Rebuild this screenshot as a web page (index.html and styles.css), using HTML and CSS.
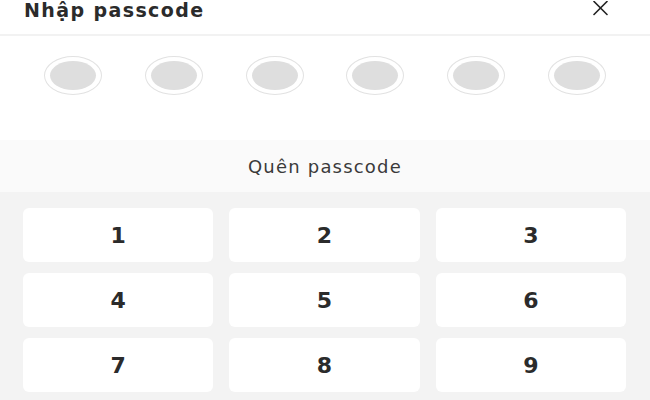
FILE: index.html
```html
<!DOCTYPE html>
<html lang="vi">
<head>
  <meta charset="UTF-8" />
  <meta name="viewport" content="width=device-width, initial-scale=1.0" />
  <title>Nhập passcode</title>
  <link rel="stylesheet" href="styles.css">
</head>
<body>
  <div class="header">
    <h1 class="title">Nhập passcode</h1>
    <button class="close-btn" aria-label="Đóng">
      <svg width="15" height="15" viewBox="0 0 15 15">
        <path d="M1 0.5 L14 13.5 M14 0.5 L1 13.5" stroke="#222" stroke-width="1.6" fill="none" stroke-linecap="round"/>
      </svg>
    </button>
  </div>

  <div class="dots">
    <div class="dot-slot"><span class="dot"><span class="dot-fill"></span></span></div>
    <div class="dot-slot"><span class="dot"><span class="dot-fill"></span></span></div>
    <div class="dot-slot"><span class="dot"><span class="dot-fill"></span></span></div>
    <div class="dot-slot"><span class="dot"><span class="dot-fill"></span></span></div>
    <div class="dot-slot"><span class="dot"><span class="dot-fill"></span></span></div>
    <div class="dot-slot"><span class="dot"><span class="dot-fill"></span></span></div>
  </div>

  <div class="forgot">
    <a href="#" class="forgot-link">Quên passcode</a>
  </div>

  <div class="keypad">
    <button class="key">1</button>
    <button class="key">2</button>
    <button class="key">3</button>
    <button class="key">4</button>
    <button class="key">5</button>
    <button class="key">6</button>
    <button class="key">7</button>
    <button class="key">8</button>
    <button class="key">9</button>
  </div>
</body>
</html>
```

FILE: styles.css
```css
* {
  margin: 0;
  padding: 0;
  box-sizing: border-box;
  font-family: "DejaVu Sans", sans-serif;
}
body {
  background: #f3f3f3;
  width: 650px;
  min-height: 400px;
}
.header {
  height: 36px;
  background: #fff;
  display: flex;
  justify-content: space-between;
  align-items: flex-start;
  padding: 1px 42px 0 24px;
  border-bottom: 2px solid #f2f2f2;
}
.title {
  font-size: 19px;
  line-height: 19px;
  font-weight: bold;
  letter-spacing: 1.4px;
  color: #2b2b2b;
}
.close-btn {
  background: none;
  border: none;
  width: 15px;
  height: 15px;
  display: block;
  cursor: pointer;
}
.close-btn svg {
  display: block;
}
.dots {
  height: 104px;
  background: #fff;
  display: flex;
  padding: 20px 23px 0 23px;
}
.dot-slot {
  flex: 1;
  display: flex;
  justify-content: center;
}
.dot {
  width: 58px;
  height: 39px;
  border: 1.5px solid #e2e2e2;
  border-radius: 50%;
  display: flex;
  align-items: center;
  justify-content: center;
}
.dot-fill {
  width: 46px;
  height: 29px;
  border-radius: 50%;
  background: #dedede;
}
.forgot {
  height: 52px;
  background: #fafafa;
  display: flex;
  align-items: center;
  justify-content: center;
}
.forgot-link {
  font-size: 18px;
  letter-spacing: 1.2px;
  color: #3a3a3a;
  text-decoration: none;
}
.keypad {
  display: grid;
  grid-template-columns: repeat(3, 1fr);
  grid-auto-rows: 54px;
  gap: 11px 16px;
  padding: 16px 24px 16px 23px;
}
.key {
  background: #fff;
  border: none;
  border-radius: 6px;
  font-size: 22px;
  font-weight: bold;
  color: #2b2b2b;
  cursor: pointer;
}
```
